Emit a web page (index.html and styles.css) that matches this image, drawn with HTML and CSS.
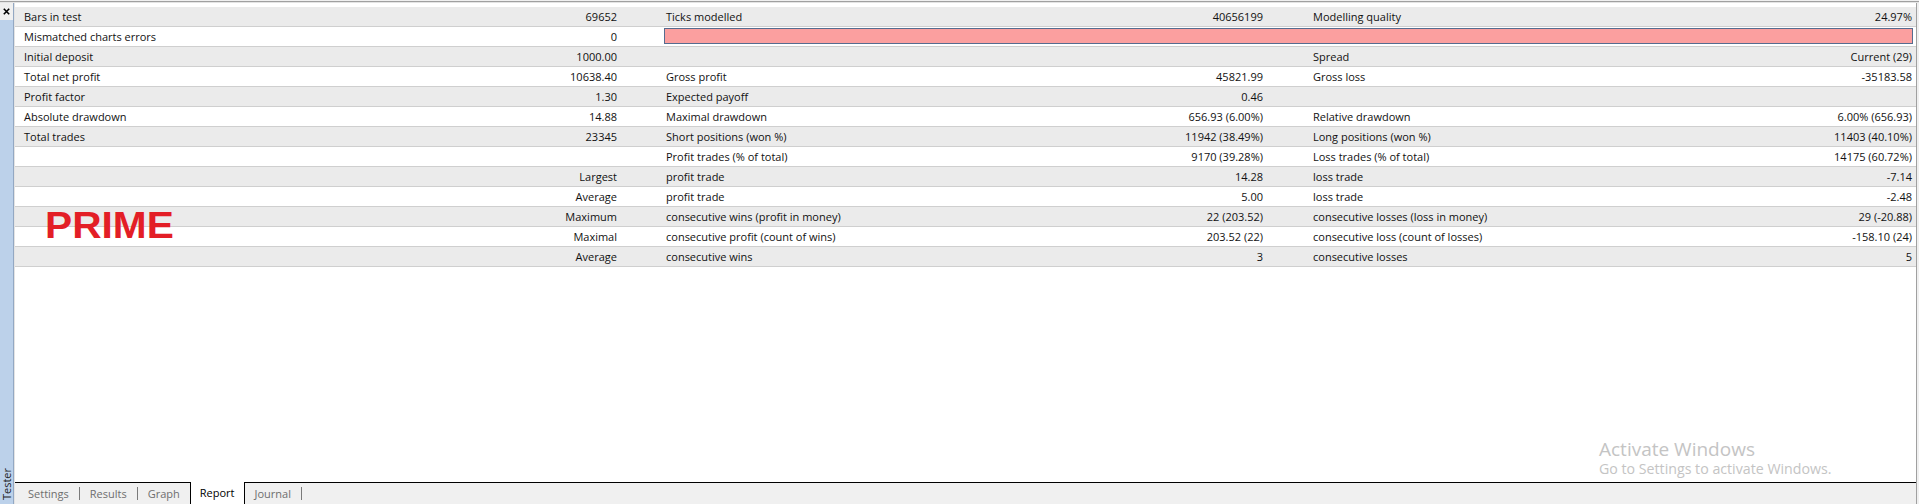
FILE: index.html
```html
<!DOCTYPE html>
<html>
<head>
<meta charset="utf-8">
<title>Tester Report</title>
<link rel="stylesheet" href="styles.css">
</head>
<body>
<div class="window">
  <div class="topline"></div>
  <div class="main">
    <div class="sidebar">
      <div class="close">
        <svg width="7" height="7" viewBox="0 0 7 7"><path d="M0.8 0.8 L6.2 6.2 M6.2 0.8 L0.8 6.2" stroke="#000" stroke-width="1.6" fill="none"/></svg>
      </div>
      <div class="vtab"><span>Tester</span></div>
    </div>
    <div class="panel">
      <div class="content">
        <div class="report">
          <div class="row alt"><div class="l1">Bars in test</div><div class="v">69652</div><div class="l2">Ticks modelled</div><div class="v">40656199</div><div class="l3">Modelling quality</div><div class="v">24.97%</div></div>
          <div class="row"><div class="l1">Mismatched charts errors</div><div class="v">0</div><div class="quality"></div></div>
          <div class="row alt"><div class="l1">Initial deposit</div><div class="v">1000.00</div><div class="l2"></div><div class="v"></div><div class="l3">Spread</div><div class="v">Current (29)</div></div>
          <div class="row"><div class="l1">Total net profit</div><div class="v">10638.40</div><div class="l2">Gross profit</div><div class="v">45821.99</div><div class="l3">Gross loss</div><div class="v">-35183.58</div></div>
          <div class="row alt"><div class="l1">Profit factor</div><div class="v">1.30</div><div class="l2">Expected payoff</div><div class="v">0.46</div><div class="l3"></div><div class="v"></div></div>
          <div class="row"><div class="l1">Absolute drawdown</div><div class="v">14.88</div><div class="l2">Maximal drawdown</div><div class="v">656.93 (6.00%)</div><div class="l3">Relative drawdown</div><div class="v">6.00% (656.93)</div></div>
          <div class="row alt"><div class="l1">Total trades</div><div class="v">23345</div><div class="l2">Short positions (won %)</div><div class="v">11942 (38.49%)</div><div class="l3">Long positions (won %)</div><div class="v">11403 (40.10%)</div></div>
          <div class="row"><div class="l1"></div><div class="v"></div><div class="l2">Profit trades (% of total)</div><div class="v">9170 (39.28%)</div><div class="l3">Loss trades (% of total)</div><div class="v">14175 (60.72%)</div></div>
          <div class="row alt"><div class="l1"></div><div class="v">Largest</div><div class="l2">profit trade</div><div class="v">14.28</div><div class="l3">loss trade</div><div class="v">-7.14</div></div>
          <div class="row"><div class="l1"></div><div class="v">Average</div><div class="l2">profit trade</div><div class="v">5.00</div><div class="l3">loss trade</div><div class="v">-2.48</div></div>
          <div class="row alt"><div class="l1"></div><div class="v">Maximum</div><div class="l2">consecutive wins (profit in money)</div><div class="v">22 (203.52)</div><div class="l3">consecutive losses (loss in money)</div><div class="v">29 (-20.88)</div></div>
          <div class="row"><div class="l1"></div><div class="v">Maximal</div><div class="l2">consecutive profit (count of wins)</div><div class="v">203.52 (22)</div><div class="l3">consecutive loss (count of losses)</div><div class="v">-158.10 (24)</div></div>
          <div class="row alt"><div class="l1"></div><div class="v">Average</div><div class="l2">consecutive wins</div><div class="v">3</div><div class="l3">consecutive losses</div><div class="v">5</div></div>
        </div>
        <div class="brand">PRIME</div>
        <div class="activate">
          <div class="t1">Activate Windows</div>
          <div class="t2">Go to Settings to activate Windows.</div>
        </div>
      </div>
      <div class="tabs">
        <div class="tab">Settings</div><div class="sep"></div>
        <div class="tab">Results</div><div class="sep"></div>
        <div class="tab">Graph</div>
        <div class="tab active">Report</div>
        <div class="tab">Journal</div><div class="sep"></div>
      </div>
    </div>
  </div>
</div>
</body>
</html>
```

FILE: styles.css
```css
* { box-sizing: border-box; }

body {
  margin: 0;
  width: 1919px;
  height: 504px;
  overflow: hidden;
  background: #f0f0f0;
  font-family: "Open Sans", "Noto Sans", sans-serif;
  font-size: 11px;
  color: #111;
}

.window {
  height: 504px;
  display: flex;
  flex-direction: column;
}

.topline {
  margin-top: 1px;
  height: 2px;
  border-top: 1px solid #a0a0a0;
  background: #e4e4e4;
}

.main {
  flex: 1;
  display: flex;
  min-height: 0;
}

.sidebar {
  width: 14px;
  display: flex;
  flex-direction: column;
  border-right: 1px solid #93a8c3;
}

.close {
  height: 17px;
  display: flex;
  align-items: center;
  justify-content: center;
  background: #f0f0f0;
}

.vtab {
  flex: 1;
  background: #bcd1ea;
  display: flex;
  flex-direction: column;
  justify-content: flex-end;
  align-items: center;
  padding-bottom: 4px;
}

.vtab span {
  writing-mode: vertical-rl;
  transform: rotate(180deg);
  font-size: 11px;
  line-height: 13px;
  color: #1e1e1e;
}

.panel {
  width: 1903px;
  display: flex;
  flex-direction: column;
  border-left: 1px solid #e3e3e3;
  border-right: 1px solid #a0a0a0;
}

.content {
  flex: 1;
  position: relative;
  background: #fff;
  padding-top: 4px;
}

.row {
  display: grid;
  grid-template-columns: 291px 302px 343px 303px 337px 312px;
  padding: 0 4px 0 9px;
  height: 20px;
  line-height: 19px;
  border-bottom: 1px solid #cfcfcf;
  white-space: nowrap;
}

.alt { background: #ebebeb; }

.v { text-align: right; }
.l2 { padding-left: 49px; }
.l3 { padding-left: 50px; }

.quality {
  grid-column: 3 / 7;
  margin: 1px -1px 2px 47px;
  height: 16px;
  background: #fb9f9f;
  border: 1px solid #566c8f;
}

.brand {
  position: absolute;
  left: 30px;
  top: 205px;
  font-family: "Liberation Sans", Arial, sans-serif;
  font-weight: 700;
  font-size: 36px;
  line-height: 36px;
  color: #e31e26;
  transform: scaleX(1.13);
  transform-origin: left top;
}

.activate {
  position: absolute;
  left: 1584px;
  top: 435px;
  color: #c4c4c4;
  white-space: nowrap;
}

.activate .t1 { font-size: 19px; line-height: 22px; }
.activate .t2 { font-size: 14.2px; line-height: 18px; }

.tabs {
  height: 22px;
  border-top: 1px solid #000;
  display: flex;
  align-items: stretch;
  padding-left: 3px;
  background: #f0f0f0;
}

.tab {
  padding: 0 10px;
  line-height: 21px;
  color: #6e6e6e;
}

.tab.active {
  margin-top: -1px;
  padding: 0 9px;
  line-height: 22px;
  background: #fff;
  color: #000;
  border-left: 1px solid #000;
  border-right: 1px solid #000;
}

.sep {
  width: 1px;
  height: 13px;
  margin-top: 4px;
  background: #7a7a7a;
}
```
